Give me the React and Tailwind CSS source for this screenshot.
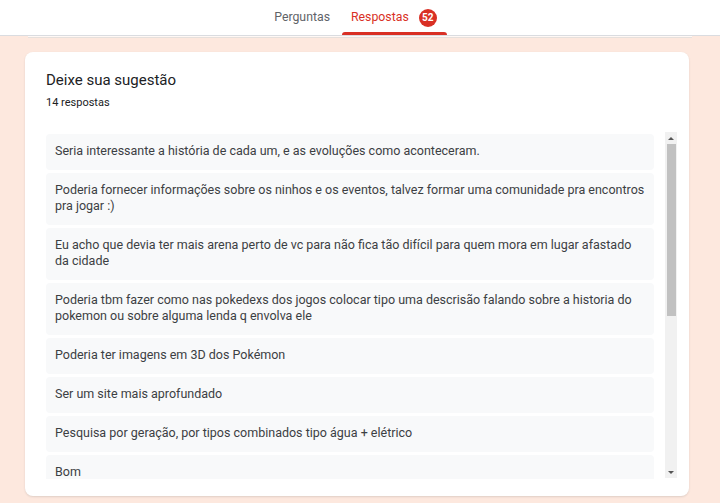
import React from "react";

const respostas = [
  "Seria interessante a história de cada um, e as evoluções como aconteceram.",
  "Poderia fornecer informações sobre os ninhos e os eventos, talvez formar uma comunidade pra encontros pra jogar :)",
  "Eu acho que devia ter mais arena perto de vc para não fica tão difícil para quem mora em lugar afastado da cidade",
  "Poderia tbm fazer como nas pokedexs dos jogos colocar tipo uma descrisão falando sobre a historia do pokemon ou sobre alguma lenda q envolva ele",
  "Poderia ter imagens em 3D dos Pokémon",
  "Ser um site mais aprofundado",
  "Pesquisa por geração, por tipos combinados tipo água + elétrico",
  "Bom",
];

export default function App() {
  return (
    <div className="w-[720px] h-[503px] overflow-hidden bg-[#fde8de] font-['Roboto','Liberation_Sans',sans-serif]">
      {/* tabs */}
      <div className="h-[36px] bg-white border-b border-[#dadce0] flex justify-center items-end">
        <div className="flex items-end mr-[9px]">
          <div className="px-[10px] h-[35px] flex items-center text-[12.3px] text-[#5f6368]">
            Perguntas
          </div>
          <div className="relative pl-[9px] pr-[10px] h-[35px] flex items-center gap-[10px] ml-[2px]">
            <span className="text-[12.3px] text-[#d93025]">Respostas</span>
            <span className="w-[18px] h-[18px] rounded-full bg-[#d93025] text-white text-[10px] font-bold flex items-center justify-center">
              52
            </span>
            <span className="absolute left-0 right-0 bottom-0 h-[3px] rounded-t-[3px] bg-[#d93025]" />
          </div>
        </div>
      </div>
      <div className="mx-[28px] h-[2px] bg-white/70 border-b border-[#e6e0dc]" />

      {/* card */}
      <div className="mt-[14px] ml-[25px] w-[664px] h-[444px] bg-white rounded-[8px] shadow-[0_1px_2px_rgba(60,64,67,0.15)] pl-[21px] pr-[12px] pt-[18px]">
        <div className="text-[15px] leading-[20px] text-[#202124]">Deixe sua sugestão</div>
        <div className="mt-[5px] text-[11px] leading-[16px] text-[#202124]">14 respostas</div>

        <div className="mt-[23px] flex h-[345px]">
          <div className="flex-1 overflow-hidden flex flex-col gap-[3px]">
            {respostas.map((r, i) => (
              <div
                key={i}
                className="bg-[#f8f9fa] rounded-[4px] px-[9px] pt-[9px] pb-[11px] text-[12.5px] leading-[16px] text-[#3c4043] shrink-0"
              >
                {r}
              </div>
            ))}
          </div>
          {/* scrollbar */}
          <div className="ml-[11px] w-[12px] -mt-[2px] h-[346px] bg-[#f1f1f1] flex flex-col items-center">
            <div className="h-[12px] flex items-center justify-center">
              <span className="w-0 h-0 border-l-[3px] border-r-[3px] border-b-[3px] border-l-transparent border-r-transparent border-b-[#555]" />
            </div>
            <div className="w-[9px] h-[172px] bg-[#c1c1c1]" />
            <div className="flex-1" />
            <div className="h-[12px] flex items-center justify-center">
              <span className="w-0 h-0 border-l-[3px] border-r-[3px] border-t-[3px] border-l-transparent border-r-transparent border-t-[#555]" />
            </div>
          </div>
        </div>
      </div>
    </div>
  );
}
